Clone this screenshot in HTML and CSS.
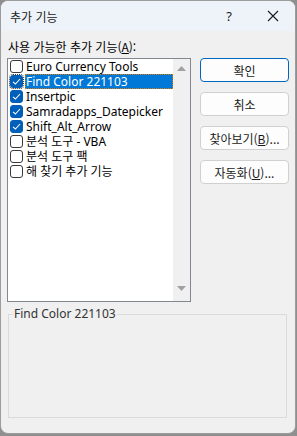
FILE: index.html
```html
<!DOCTYPE html>
<html lang="ko">
<head>
<meta charset="utf-8">
<link rel="stylesheet" href="styles.css">
</head>
<body>
<div class="window">
  <div class="titlebar">
    <span class="title">추가 기능</span>
    <span class="help">?</span>
    <svg class="close" width="12" height="12" viewBox="0 0 12 12"><path d="M1 1 L11 11 M11 1 L1 11" stroke="#1a1a1a" stroke-width="1.1" fill="none"/></svg>
  </div>
  <div class="content">
    <div class="label">사용 가능한 추가 기능(<u>A</u>):</div>
    <div class="main">
      <div class="listbox">
        <ul class="items">
          <li class="item"><span class="cb"></span><span class="txt">Euro Currency Tools</span></li>
          <li class="item sel"><span class="cb on"><svg viewBox="0 0 13 13" width="13" height="13"><path d="M3 6.8 L5.4 9 L10 4" stroke="#fff" stroke-width="1.1" fill="none"/></svg></span><span class="txt">Find Color 221103</span></li>
          <li class="item"><span class="cb on"><svg viewBox="0 0 13 13" width="13" height="13"><path d="M3 6.8 L5.4 9 L10 4" stroke="#fff" stroke-width="1.1" fill="none"/></svg></span><span class="txt">Insertpic</span></li>
          <li class="item"><span class="cb on"><svg viewBox="0 0 13 13" width="13" height="13"><path d="M3 6.8 L5.4 9 L10 4" stroke="#fff" stroke-width="1.1" fill="none"/></svg></span><span class="txt">Samradapps_Datepicker</span></li>
          <li class="item"><span class="cb on"><svg viewBox="0 0 13 13" width="13" height="13"><path d="M3 6.8 L5.4 9 L10 4" stroke="#fff" stroke-width="1.1" fill="none"/></svg></span><span class="txt">Shift_Alt_Arrow</span></li>
          <li class="item"><span class="cb"></span><span class="txt">분석 도구 - VBA</span></li>
          <li class="item"><span class="cb"></span><span class="txt">분석 도구 팩</span></li>
          <li class="item"><span class="cb"></span><span class="txt">해 찾기 추가 기능</span></li>
        </ul>
        <div class="scrollbar">
          <svg width="9" height="6" viewBox="0 0 9 6"><path d="M0 5 L4.5 0 L9 5 Z" fill="#a0a0a0"/></svg>
          <svg width="9" height="6" viewBox="0 0 9 6"><path d="M0 0 L9 0 L4.5 5 Z" fill="#a0a0a0"/></svg>
        </div>
      </div>
      <div class="buttons">
        <button class="btn default">확인</button>
        <button class="btn">취소</button>
        <button class="btn">찾아보기(<u>B</u>)...</button>
        <button class="btn">자동화(<u>U</u>)...</button>
      </div>
    </div>
    <fieldset class="group">
      <legend>Find Color 221103</legend>
    </fieldset>
  </div>
</div>
</body>
</html>
```

FILE: styles.css
```css
html, body {
  margin: 0;
  padding: 0;
  background: #8f8f8f;
}
body {
  width: 297px;
  height: 436px;
  font-family: "Noto Sans", "Noto Sans CJK KR", sans-serif;
  font-size: 12px;
  color: #000;
}
.window {
  width: 294px;
  height: 432px;
  border: 1px solid #9c9c9c;
  border-radius: 8px;
  background: #f0f0f0;
  overflow: hidden;
}
.titlebar {
  height: 30px;
  background: #eef3f9;
  display: flex;
  align-items: center;
  padding-left: 9px;
}
.title {
  flex: 1;
  font-family: "Noto Sans CJK KR", sans-serif;
  font-size: 12px;
  color: #1a1a1a;
}
.help {
  font-size: 13px;
  color: #1a1a1a;
  margin-right: 35px;
}
.close {
  margin-right: 16px;
}
.content {
  padding: 8px 0 0 6px;
}
.label {
  font-family: "Noto Sans CJK KR", sans-serif;
  line-height: 16px;
  height: 16px;
  margin-bottom: 3px;
  padding-left: 1px;
}
.main {
  display: flex;
  align-items: flex-start;
}
.listbox {
  width: 182px;
  height: 242px;
  border: 1px solid #828790;
  background: #fff;
  display: flex;
}
.items {
  list-style: none;
  margin: 0;
  padding: 0;
  flex: 1;
}
.item {
  height: 15px;
  display: flex;
  align-items: center;
  padding-left: 2px;
}
.cb {
  width: 11px;
  height: 11px;
  border: 1px solid #3a3a3a;
  border-radius: 3px;
  background: #fff;
  margin-right: 2px;
  display: flex;
  flex-shrink: 0;
  position: relative;
}
.cb.on {
  background: #005fb8;
  border-color: #005fb8;
}
.cb svg {
  position: absolute;
  left: -1px;
  top: -1px;
}
.txt {
  flex: 1;
  height: 15px;
  line-height: 15px;
  padding-left: 1px;
  white-space: nowrap;
  overflow: hidden;
  font-family: "Noto Sans", "Noto Sans CJK KR", sans-serif;
  font-size: 12px;
}
.sel .txt {
  background: #0078d7;
  color: #fff;
  outline: 1px dotted #e07b00;
  outline-offset: -1px;
}
.sel .cb {
  outline: 1px dotted #333;
  outline-offset: 0;
}
.scrollbar {
  width: 17px;
  background: #f0f0f0;
  display: flex;
  flex-direction: column;
  justify-content: space-between;
  align-items: center;
  padding: 7px 0 9px;
  box-sizing: border-box;
}
.buttons {
  display: flex;
  flex-direction: column;
  gap: 10px;
  margin-left: 9px;
}
.btn {
  width: 89px;
  height: 24px;
  border: 1px solid #d0d0d0;
  border-radius: 4px;
  background: #fdfdfd;
  font-family: "Noto Sans CJK KR", "Noto Sans", sans-serif;
  font-size: 12px;
  color: #1a1a1a;
  padding: 0;
}
.btn.default {
  border-color: #0067c0;
}
.group {
  margin: 5px 0 0 1px;
  width: 279px;
  height: 111px;
  box-sizing: border-box;
  border: 1px solid #dadada;
  padding: 0;
}
.group legend {
  margin-left: 4px;
  padding: 0 1px;
  color: #333;
  font-family: "Noto Sans", sans-serif;
  font-size: 12px;
  line-height: 14px;
}
```
